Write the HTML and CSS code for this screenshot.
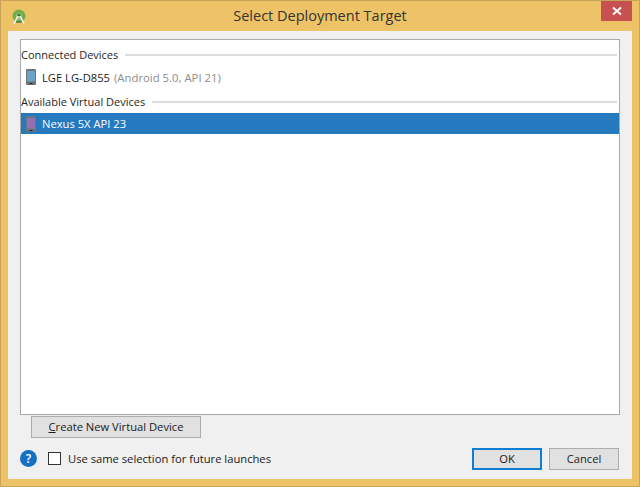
FILE: index.html
```html
<!DOCTYPE html>
<html lang="en">
<head>
<meta charset="utf-8">
<title>Select Deployment Target</title>
<link rel="stylesheet" href="styles.css">
</head>
<body>
<div class="window">
  <header class="titlebar">
    <svg class="app-icon" viewBox="0 0 16 16" width="16" height="16" aria-hidden="true">
      <circle cx="8" cy="7" r="6.5" fill="#6fae4a"/>
      <circle cx="8" cy="7.5" r="3.2" fill="#9cc873"/>
      <path d="M3 14.5 L7.2 6.5 M13 14.5 L8.8 6.5" fill="none" stroke="#f6f6ee" stroke-width="1.6"/>
      <path d="M5 13 H11" stroke="#3f6f3a" stroke-width="1.2"/>
      <path d="M6.4 5.2 H9.6 V7 H6.4 Z" fill="#3c6a3a"/>
    </svg>
    <h1 class="title">Select Deployment Target</h1>
    <button class="close" type="button" aria-label="Close">
      <svg viewBox="0 0 10 10" width="10" height="10" aria-hidden="true">
        <path d="M1 1.5 L9 8.5 M9 1.5 L1 8.5" stroke="#fff" stroke-width="1.9"/>
      </svg>
    </button>
  </header>
  <main class="content">
    <section class="list">
      <div class="group"><span>Connected Devices</span><i class="rule"></i></div>
      <div class="row connected">
        <svg class="device" viewBox="0 0 10 16" width="10" height="16" aria-hidden="true">
          <rect x="0" y="0" width="10" height="16" rx="1.2" fill="#6c7479"/>
          <rect x="1" y="2" width="8" height="10.5" fill="#6aa3c6"/>
          <rect x="3.5" y="14" width="3" height="1" fill="#26292b"/>
        </svg>
        <span class="name">LGE LG-D855</span><span class="meta">(Android 5.0, API 21)</span>
      </div>
      <div class="group"><span>Available Virtual Devices</span><i class="rule"></i></div>
      <div class="row selected">
        <svg class="device" viewBox="0 0 10 16" width="10" height="16" aria-hidden="true">
          <rect x="0" y="0" width="10" height="16" rx="1.2" fill="#6a7480"/>
          <rect x="1" y="2" width="8" height="10.5" fill="#9470b0"/>
          <rect x="3.5" y="14" width="3" height="1" fill="#1c2126"/>
        </svg>
        <span class="name">Nexus 5X API 23</span>
      </div>
    </section>
    <div class="create-row">
      <button class="btn create" type="button"><u>C</u>reate New Virtual Device</button>
    </div>
    <footer class="footer">
      <span class="help">?</span>
      <label class="check"><i class="box"></i>Use same selection for future launches</label>
      <div class="actions">
        <button class="btn action default" type="button">OK</button>
        <button class="btn action" type="button">Cancel</button>
      </div>
    </footer>
  </main>
</div>
</body>
</html>
```
FILE: styles.css
```css
* { box-sizing: border-box; }
html, body { margin: 0; padding: 0; }
body {
  width: 640px;
  height: 487px;
  overflow: hidden;
  font-family: "Open Sans", "Noto Sans", sans-serif;
  font-size: 11.2px;
  color: #1a1a1a;
}
.window {
  width: 640px;
  height: 487px;
  background: #eec367;
  border: 1px solid #c9a558;
  padding: 0 7px 7px;
  display: flex;
  flex-direction: column;
}
.titlebar {
  height: 30px;
  flex: none;
  display: flex;
  align-items: center;
  position: relative;
  padding-bottom: 2px;
}
.app-icon { margin: 3px 0 0 3px; flex: none; }
.title {
  flex: 1;
  margin: 0 0 0 -19px;
  text-align: center;
  font-size: 14.5px;
  font-weight: 400;
  color: #333;
}
.close {
  position: absolute;
  top: 0;
  right: 0;
  width: 31px;
  height: 20px;
  padding: 0;
  border: 0;
  background: #c75050;
  display: flex;
  align-items: center;
  justify-content: center;
}
.content {
  flex: 1;
  background: #f0f0f0;
  padding: 8px 12px 0;
  display: flex;
  flex-direction: column;
  min-height: 0;
}
.list {
  height: 376px;
  flex: none;
  background: #fff;
  border: 1px solid #a9a9a9;
  padding-top: 7px;
}
.group {
  height: 16px;
  display: flex;
  align-items: center;
  gap: 7px;
  color: #1f1f1f;
  font-size: 11px;
  line-height: 16px;
}
.rule { flex: 1; height: 2px; background: #dcdcdc; margin-right: 2px; }
.row {
  display: flex;
  align-items: center;
  padding-left: 5px;
  white-space: pre;
}
.connected { height: 22px; margin-top: 3px; margin-bottom: 6px; }
.device { flex: none; margin-right: 6px; }
.name { color: #1a1a1a; }
.meta { color: #8c8c8c; margin-left: 4px; font-size: 11.35px; }
.selected { height: 21px; background: #2479bf; margin-top: 3px; }
.selected .name { color: #fff; }
.create-row { padding: 1px 0 0 11px; }
.btn {
  font: inherit;
  color: #1a1a1a;
  background: #e1e1e1;
  border: 1px solid #adadad;
  padding: 0;
}
.create { width: 170px; height: 22px; padding-bottom: 2px; }
.footer {
  display: flex;
  align-items: center;
  margin-top: 9px;
  height: 23px;
}
.help {
  width: 17px;
  height: 17px;
  border-radius: 50%;
  background: #1670c4;
  color: #fff;
  font-weight: 600;
  font-size: 12px;
  line-height: 17px;
  text-align: center;
  flex: none;
}
.check { display: flex; align-items: center; margin-left: 11px; color: #1a1a1a; }
.box {
  width: 13px;
  height: 13px;
  background: #fff;
  border: 1px solid #333;
  margin-right: 7px;
  flex: none;
}
.actions { margin-left: auto; display: flex; gap: 7px; padding-right: 1px; }
.action { width: 70px; height: 22px; }
.default { border: 2px solid #0f7ed2; }
```
